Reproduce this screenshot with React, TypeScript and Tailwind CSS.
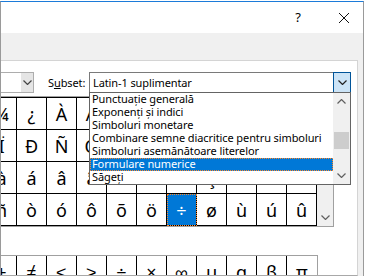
import React from 'react';

const rows = [
    ['¾', '¿', 'À', 'Á', 'Â', 'Ã', 'Ä', 'Å', 'Æ', 'Ç', 'È'],
    ['Ï', 'Ð', 'Ñ', 'Ò', 'Ó', 'Ô', 'Õ', 'Ö', '×', 'Ø', 'Ù'],
    ['à', 'á', 'â', 'ã', 'ä', 'å', 'æ', 'ç', 'è', 'é', 'ê'],
    ['ñ', 'ò', 'ó', 'ô', 'õ', 'ö', '÷', 'ø', 'ù', 'ú', 'û'],
];

const recent = ['±', '≠', '≤', '≥', '÷', '×', '∞', 'µ', 'α', 'β', 'π'];

const subsets = [
    'Punctuație generală',
    'Exponenți și indici',
    'Simboluri monetare',
    'Combinare semne diacritice pentru simboluri',
    'Simboluri asemănătoare literelor',
    'Formulare numerice',
    'Săgeți',
];

const Chevron: React.FC<{ up?: boolean; className?: string }> = ({ up, className }) => (
    <svg width="9" height="5" viewBox="0 0 9 5" className={className}>
        <path d={up ? 'M0.5 4.5 L4.5 0.5 L8.5 4.5' : 'M0.5 0.5 L4.5 4.5 L8.5 0.5'} fill="none" stroke="currentColor" strokeWidth="1.2" />
    </svg>
);

const App: React.FC = () => {
    return (
        <div className="w-[366px] h-[276px] bg-white overflow-hidden font-['Noto_Sans',sans-serif] text-black">
            <div className="mt-px w-[364px] h-[275px] border-t border-l border-r border-t-[#1c7bd9] border-l-[#9a9a9a] border-r-[#9a9a9a] flex flex-col">
                {/* Title bar */}
                <div className="h-[31px] bg-white flex items-center justify-end pr-[14px]">
                    <span className="text-[13px] leading-none mr-[38px]">?</span>
                    <svg width="10" height="10" viewBox="0 0 10 10">
                        <path d="M0 0 L10 10 M10 0 L0 10" stroke="#111" strokeWidth="1" />
                    </svg>
                </div>

                <div className="flex-1 bg-[#f0f0f0] pt-[27px] pr-[5px]">
                    <div className="h-[216px] bg-white border-t border-r border-b border-[#d4d4d4] border-b-[#a8a8a8] overflow-hidden pt-[11px]">
                        {/* Font / Subset row */}
                        <div className="flex items-start h-[21px] relative z-10 text-[11px] tracking-[-0.1px]">
                            <div className="-ml-[40px] w-[73px] h-[21px] border border-[#adadad] bg-white flex justify-end">
                                <div className="w-[12px] h-full bg-[#e5e5e5] flex items-center justify-center text-[#444]">
                                    <Chevron />
                                </div>
                            </div>
                            <div className="ml-[14px] w-[41px] leading-[21px]">
                                S<span className="underline">u</span>bset:
                            </div>
                            <div className="w-[262px] h-[21px] border border-[#7a7a7a] bg-white flex relative">
                                <span className="flex-1 pl-[3px] leading-[19px]">Latin-1 suplimentar</span>
                                <div className="-my-px -mr-px w-[18px] h-[21px] border border-[#005499] bg-[#cce4f7] flex items-center justify-center text-[#222]">
                                    <Chevron />
                                </div>

                                {/* Open dropdown list */}
                                <div className="absolute -left-px top-[19px] w-[262px] h-[93px] border border-[#646464] bg-white flex">
                                    <div className="w-[243px] flex flex-col">
                                        {subsets.map((s, i) => (
                                            <div
                                                key={s}
                                                className={`h-[13px] pl-[2px] leading-[12px] whitespace-nowrap ${i === 5 ? 'bg-[#0078d7] text-white outline-1 outline-dotted outline-offset-[-1px] outline-[#ff8728]' : ''}`}
                                            >
                                                {s}
                                            </div>
                                        ))}
                                    </div>
                                    <div className="w-[17px] bg-[#f0f0f0] flex flex-col">
                                        <div className="h-[17px] flex items-center justify-center text-[#606060]">
                                            <Chevron up />
                                        </div>
                                        <div className="flex-1 pt-[22px]">
                                            <div className="ml-[1px] w-[15px] h-[17px] bg-[#cdcdcd]" />
                                        </div>
                                        <div className="h-[17px] flex items-center justify-center text-[#606060]">
                                            <Chevron />
                                        </div>
                                    </div>
                                </div>
                            </div>
                        </div>

                        {/* Character grid */}
                        <div className="mt-[3px] -ml-[15px] w-fit border border-[#a0a0a0] flex">
                            <div className="border-t border-black">
                                {rows.map((row, r) => (
                                    <div key={r} className="flex">
                                        {row.map((ch, c) => {
                                            const sel = r === 3 && c === 6;
                                            return (
                                                <div
                                                    key={c}
                                                    className={`w-[30px] h-[32px] border-r border-b border-black flex items-center justify-center text-[18px] leading-none ${sel ? 'bg-[#0078d7] text-white outline-1 outline-dotted outline-offset-[-1px] outline-[#ff8728]' : ''}`}
                                                >
                                                    {ch}
                                                </div>
                                            );
                                        })}
                                    </div>
                                ))}
                            </div>
                            <div className="w-[16px] bg-[#f0f0f0] flex flex-col justify-end">
                                <div className="h-[17px] flex items-center justify-center text-[#606060]">
                                    <Chevron />
                                </div>
                            </div>
                        </div>

                        {/* Recently used symbols */}
                        <div className="mt-[28px] -ml-[15px] w-fit border-t border-l border-r border-[#a0a0a0] flex">
                            {recent.map((ch, i) => (
                                <div
                                    key={i}
                                    className={`w-[30px] h-[32px] flex items-center justify-center text-[18px] leading-none ${i < recent.length - 1 ? 'border-r border-black' : ''}`}
                                >
                                    {ch}
                                </div>
                            ))}
                        </div>
                    </div>
                </div>
            </div>
        </div>
    );
};

export default App;
